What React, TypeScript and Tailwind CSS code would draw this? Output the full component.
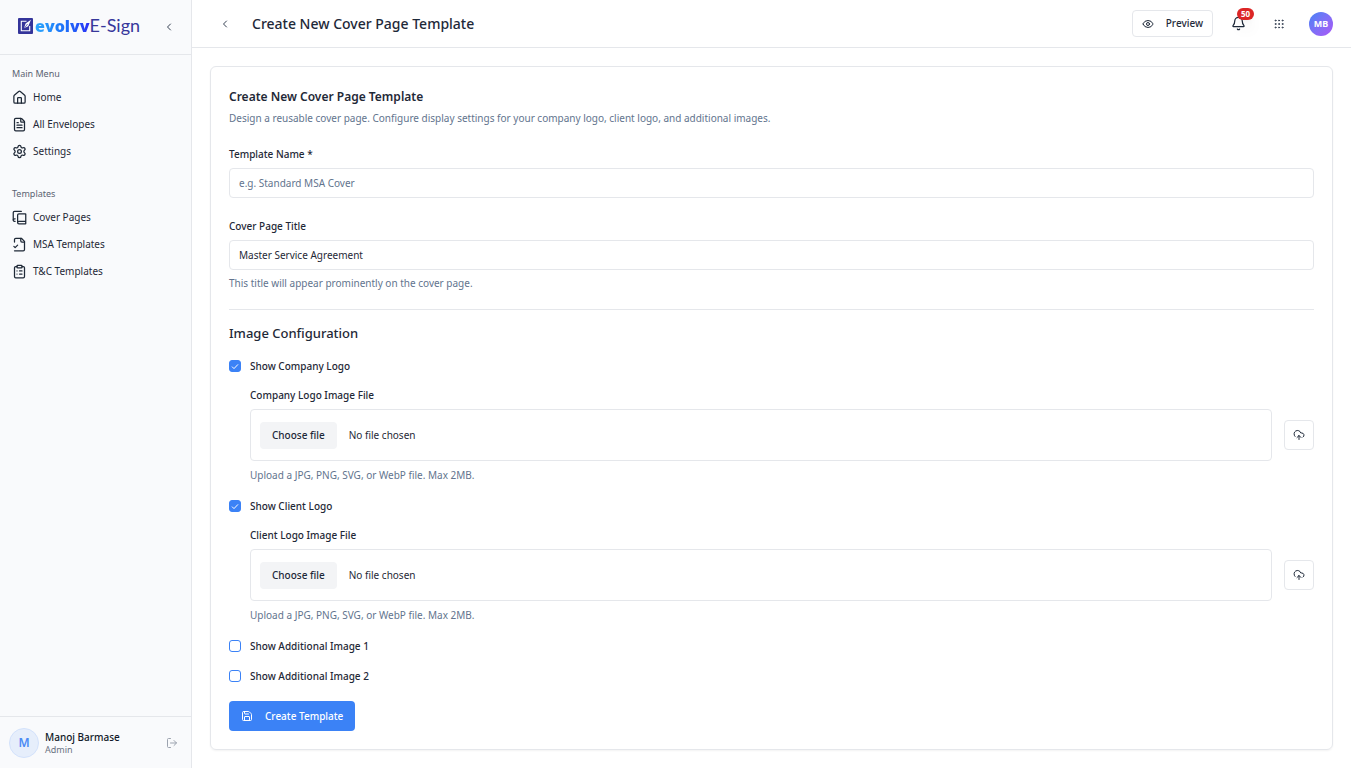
import { useState } from 'react'
import type { ComponentType, ReactNode } from 'react'
import { Bell, ChevronLeft, ClipboardList, CloudUpload, Eye, FileText, Grip, House, LogOut, Save, Settings } from 'lucide-react'

type IconProps = { size?: number }
type NavItem = { label: string; href: string; icon: ComponentType<IconProps> }

function StrokeIcon({ size = 24, children }: IconProps & { children: ReactNode }) {
  return (
    <svg width={size} height={size} viewBox="0 0 24 24" fill="none" stroke="currentColor" strokeWidth="2" strokeLinecap="round" strokeLinejoin="round">
      {children}
    </svg>
  )
}

function CoverPagesIcon({ size }: IconProps) {
  return (
    <StrokeIcon size={size}>
      <path d="M2 16V4a2 2 0 0 1 2-2h11" />
      <path d="M22 18H11a2 2 0 1 0 0 4h10.5a.5.5 0 0 0 .5-.5v-15a.5.5 0 0 0-.5-.5H11a2 2 0 0 0-2 2v12" />
      <path d="M5 14H4a2 2 0 1 0 0 4h1" />
    </StrokeIcon>
  )
}

function FileCheckIcon({ size }: IconProps) {
  return (
    <StrokeIcon size={size}>
      <path d="M4 22h14a2 2 0 0 0 2-2V7l-5-5H6a2 2 0 0 0-2 2v4" />
      <path d="M14 2v4a2 2 0 0 0 2 2h4" />
      <path d="m3 15 2 2 4-4" />
    </StrokeIcon>
  )
}

const mainMenu: NavItem[] = [
  { label: 'Home', href: '#home', icon: House },
  { label: 'All Envelopes', href: '#envelopes', icon: FileText },
  { label: 'Settings', href: '#settings', icon: Settings },
]

const templateMenu: NavItem[] = [
  { label: 'Cover Pages', href: '#cover-pages', icon: CoverPagesIcon },
  { label: 'MSA Templates', href: '#msa', icon: FileCheckIcon },
  { label: 'T&C Templates', href: '#terms', icon: ClipboardList },
]

function Logo() {
  return (
    <a href="#home" className="flex items-center gap-0.5 pb-0.5">
      <svg width="15" height="18" viewBox="0 0 15 18" fill="none">
        <rect y="1" width="15" height="16" rx="1" fill="#34349a" />
        <path d="M8.5 4.2H3.3v9.6h8.4V9" stroke="#fff" strokeWidth="1.1" />
        <path d="M13 2.8 7.6 6.6 6 11.2l4.2-2z" fill="#fff" />
        <path d="m5.6 12 4-5" stroke="#34349a" strokeWidth="0.7" />
      </svg>
      <span className="flex items-baseline pb-0.5 leading-6">
        <span className="bg-linear-to-r from-[#2ea8fb] to-[#2a2cf5] bg-clip-text font-['Open_Sans'] text-[16px] font-extrabold text-transparent">evolvv</span>
        <span className="font-[Lato] text-[18px] text-[#37379b]">E-Sign</span>
      </span>
    </a>
  )
}

function NavSection({ title, items }: { title: string; items: NavItem[] }) {
  return (
    <div>
      <h2 className="mb-px px-3 text-[9px] leading-[18px] text-[#5b6472]">{title}</h2>
      <ul>
        {items.map(({ label, href, icon: Icon }) => (
          <li key={label}>
            <a href={href} className="flex h-[27px] items-center gap-1.5 px-3 text-[#1f2937]">
              <Icon size={15} />
              {label}
            </a>
          </li>
        ))}
      </ul>
    </div>
  )
}

function Sidebar() {
  return (
    <aside className="flex w-48 shrink-0 flex-col border-r border-gray-200 bg-[#f9fafc]">
      <div className="flex h-[55px] items-center justify-between border-b border-gray-200 pr-4 pl-[18px]">
        <Logo />
        <button aria-label="Collapse sidebar" className="text-gray-700">
          <ChevronLeft size={12} />
        </button>
      </div>
      <nav className="flex flex-1 flex-col gap-5 pt-2.5">
        <NavSection title="Main Menu" items={mainMenu} />
        <NavSection title="Templates" items={templateMenu} />
      </nav>
      <div className="flex h-[52px] items-center border-t border-gray-200 px-[9px]">
        <div className="flex size-[30px] items-center justify-center rounded-full border border-[#d3e2fb] bg-[#e6eefb] text-[12px] font-semibold text-[#4b8bf5]">M</div>
        <div className="ml-1.5 flex-1">
          <p className="leading-[14px] font-medium text-gray-900">Manoj Barmase</p>
          <p className="text-[9px] leading-3 text-gray-500">Admin</p>
        </div>
        <button aria-label="Log out" className="mr-1 text-[#9ca3af]">
          <LogOut size={12} />
        </button>
      </div>
    </aside>
  )
}

function Header() {
  return (
    <header className="flex h-12 items-center border-b border-gray-200 pr-[18px] pl-[27px]">
      <button aria-label="Back" className="text-gray-700">
        <ChevronLeft size={12} />
      </button>
      <h1 className="ml-[21px] flex-1 text-[14px] font-medium text-gray-800">Create New Cover Page Template</h1>
      <button className="flex h-[27px] items-center gap-3 rounded-[4px] border border-gray-200 px-[9px] font-medium text-gray-800">
        <Eye size={12} />
        Preview
      </button>
      <button aria-label="Notifications" className="relative ml-[18px] text-gray-800">
        <Bell size={15} />
        <span className="absolute -top-2 left-1.5 flex h-3 items-center rounded-full bg-[#dc2626] px-1 text-[8px] font-bold text-white shadow-lg">50</span>
      </button>
      <button aria-label="Apps" className="ml-[27px] text-gray-700">
        <Grip size={12} />
      </button>
      <button aria-label="Account" className="ml-6 size-6 rounded-full bg-linear-to-br from-[#3b82f6] to-[#a855f7] text-[9px] font-bold text-white">MB</button>
    </header>
  )
}

function CheckRow({ id, label, checked, onChange }: { id: string; label: string; checked: boolean; onChange: () => void }) {
  return (
    <div className="flex h-[18px] items-center gap-[9px]">
      <span className="relative flex size-3">
        <input
          id={id}
          type="checkbox"
          checked={checked}
          onChange={onChange}
          className="size-3 appearance-none rounded-[3px] border border-[#3b82f6] bg-white checked:bg-[#3b82f6]"
        />
        {checked && (
          <svg viewBox="0 0 12 12" className="pointer-events-none absolute inset-0 size-3" fill="none" stroke="#fff">
            <path d="m3 6.6 2 2 4-4.2" />
          </svg>
        )}
      </span>
      <label htmlFor={id} className="font-medium">{label}</label>
    </div>
  )
}

function LogoUpload({ id, label }: { id: string; label: string }) {
  return (
    <div className="mt-[11px] pl-[21px]">
      <label htmlFor={id} className="block font-medium">{label}</label>
      <div className="mt-[5px] flex items-center gap-3">
        <label htmlFor={id} className="flex h-[52px] flex-1 items-center gap-3 rounded-[4px] border border-gray-200 px-[9px]">
          <input id={id} type="file" accept=".jpg,.png,.svg,.webp" className="sr-only" />
          <span className="flex h-[27px] items-center rounded-[4px] bg-gray-100 px-3 font-medium text-gray-800">Choose file</span>
          <span>No file chosen</span>
        </label>
        <button type="button" aria-label={`Upload ${label}`} className="flex size-[30px] items-center justify-center rounded-[4px] border border-gray-200 text-gray-800">
          <CloudUpload size={12} />
        </button>
      </div>
      <p className="mt-[5px] text-slate-500">Upload a JPG, PNG, SVG, or WebP file. Max 2MB.</p>
    </div>
  )
}

export default function App() {
  const [title, setTitle] = useState('Master Service Agreement')
  const [shown, setShown] = useState({ company: true, client: true, extra1: false, extra2: false })
  const toggle = (key: keyof typeof shown) => setShown({ ...shown, [key]: !shown[key] })

  return (
    <div className="flex min-h-screen bg-white pr-[15px] font-['Noto_Sans','Open_Sans',sans-serif] text-[10px] text-[#1f2937]">
      <Sidebar />
      <div className="min-w-0 flex-1">
        <Header />
        <main className="p-[18px]">
          <form className="rounded-[6px] border border-gray-200 px-[18px] pt-[18px] pb-[18px] leading-[18px] shadow-xs">
            <h2 className="text-[12px] leading-6 font-semibold">Create New Cover Page Template</h2>
            <p className="text-slate-500">Design a reusable cover page. Configure display settings for your company logo, client logo, and additional images.</p>

            <div className="mt-[18px] flex flex-col gap-[5px]">
              <label htmlFor="name" className="font-medium">Template Name *</label>
              <input id="name" placeholder="e.g. Standard MSA Cover" className="h-[30px] rounded-[4px] border border-gray-200 px-[9px] placeholder:text-slate-500" />
            </div>
            <div className="mt-[19px] flex flex-col gap-[5px]">
              <label htmlFor="title" className="font-medium">Cover Page Title</label>
              <input id="title" value={title} onChange={(e) => setTitle(e.target.value)} className="h-[30px] rounded-[4px] border border-gray-200 px-[9px]" />
            </div>
            <p className="mt-1 text-slate-500">This title will appear prominently on the cover page.</p>

            <h3 className="mt-[17px] border-t border-gray-200 pt-3 text-[13px] leading-[22px] font-medium">Image Configuration</h3>
            <div className="mt-[13px] flex flex-col gap-[13px]">
              <div>
                <CheckRow id="company" label="Show Company Logo" checked={shown.company} onChange={() => toggle('company')} />
                {shown.company && <LogoUpload id="company-file" label="Company Logo Image File" />}
              </div>
              <div>
                <CheckRow id="client" label="Show Client Logo" checked={shown.client} onChange={() => toggle('client')} />
                {shown.client && <LogoUpload id="client-file" label="Client Logo Image File" />}
              </div>
              <div className="flex flex-col gap-3">
                <CheckRow id="extra1" label="Show Additional Image 1" checked={shown.extra1} onChange={() => toggle('extra1')} />
                <CheckRow id="extra2" label="Show Additional Image 2" checked={shown.extra2} onChange={() => toggle('extra2')} />
              </div>
            </div>
            <button type="button" className="mt-4 flex h-[30px] items-center gap-3 rounded-[4px] bg-[#3b82f6] px-3 font-medium text-white">
              <Save size={12} />
              Create Template
            </button>
          </form>
        </main>
      </div>
    </div>
  )
}
